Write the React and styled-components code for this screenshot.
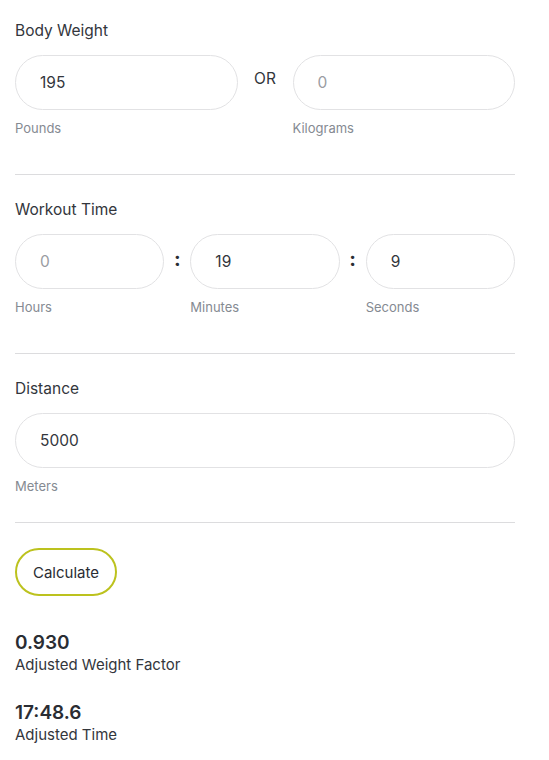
import React from 'react'
import styled, { createGlobalStyle } from 'styled-components'

const GlobalStyle = createGlobalStyle`
  body {
    margin: 0;
    background: #fff;
    font-family: Inter, "Noto Sans", sans-serif;
    color: #2a2d33;
  }
`

function Field({ value, muted, label }) {
  return (
    <FieldCol>
      <Input defaultValue={value} $muted={muted} />
      <SubLabel>{label}</SubLabel>
    </FieldCol>
  )
}

function App() {
  return (
    <Page>
      <GlobalStyle />
      <Section>
        <Label>Body Weight</Label>
        <Row>
          <Field value="195" label="Pounds" />
          <Or>OR</Or>
          <Field value="0" muted label="Kilograms" />
        </Row>
      </Section>
      <Divider />

      <Section>
        <Label>Workout Time</Label>
        <Row>
          <Field value="0" muted label="Hours" />
          <Colon>:</Colon>
          <Field value="19" label="Minutes" />
          <Colon>:</Colon>
          <Field value="9" label="Seconds" />
        </Row>
      </Section>
      <Divider />

      <Section $short>
        <Label>Distance</Label>
        <Row>
          <Field value="5000" label="Meters" />
        </Row>
      </Section>
      <Divider />

      <Button>Calculate</Button>

      <Result>
        <Value>0.930</Value>
        <Caption>Adjusted Weight Factor</Caption>
      </Result>
      <Result>
        <Value>17:48.6</Value>
        <Caption>Adjusted Time</Caption>
      </Result>
    </Page>
  )
}

const Page = styled.div`
  width: 500px;
  padding: 21px 15px 20px;
`
const Section = styled.div`
  padding-bottom: ${p => (p.$short ? '28px' : '38px')};
`
const Label = styled.div`
  font-size: 15.5px;
  line-height: 20px;
  margin-bottom: 14px;
  color: #33363c;
`
const Row = styled.div`
  display: flex;
  align-items: flex-start;
`
const FieldCol = styled.div`
  flex: 1;
  min-width: 0;
  display: flex;
  flex-direction: column;
`
const Input = styled.input`
  box-sizing: border-box;
  width: 100%;
  height: 55px;
  border: 1px solid #e2e2e4;
  border-radius: 28px;
  padding: 0 24px;
  font-family: Inter, "Noto Sans", sans-serif;
  font-size: 15.5px;
  color: ${p => (p.$muted ? '#9a9ca2' : '#33363c')};
  background: #fff;
  outline: none;
`
const SubLabel = styled.div`
  margin-top: 10px;
  font-size: 13px;
  line-height: 16px;
  color: #858a92;
`
const Or = styled.div`
  width: 55px;
  flex: none;
  text-align: center;
  font-size: 15.5px;
  line-height: 20px;
  padding-top: 14px;
  color: #33363c;
`
const Colon = styled.div`
  width: 26px;
  flex: none;
  text-align: center;
  font-size: 20px;
  font-weight: 700;
  line-height: 24px;
  padding-top: 13px;
  color: #2a2d33;
`
const Divider = styled.hr`
  margin: 0 0 25px;
  border: none;
  border-top: 1px solid #dcdcde;
`
const Button = styled.button`
  box-sizing: border-box;
  height: 48px;
  width: 102px;
  border: 2px solid #bcc21e;
  border-radius: 24px;
  background: #fff;
  font-family: Inter, "Noto Sans", sans-serif;
  font-size: 15px;
  color: #2a2d33;
  cursor: pointer;
  margin-bottom: 35px;
`
const Result = styled.div`
  margin-bottom: 26px;
`
const Value = styled.div`
  font-size: 19px;
  font-weight: 600;
  line-height: 24px;
  color: #2a2d33;
`
const Caption = styled.div`
  font-size: 15px;
  line-height: 20px;
  color: #33363c;
`

export default App
